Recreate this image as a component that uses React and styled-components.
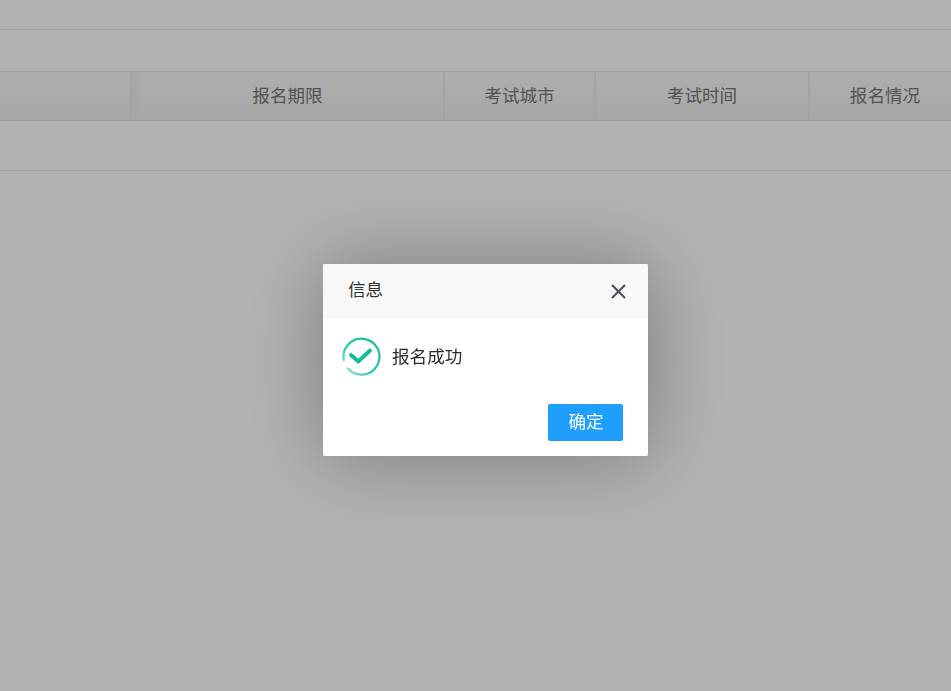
import React from "react"
import styled, { createGlobalStyle } from "styled-components"

const GlobalStyle = createGlobalStyle`
  html, body {
    margin: 0;
    padding: 0;
    height: 100%;
    background: #fff;
    overflow: hidden;
    font-family: "Liberation Sans", "Noto Sans CJK SC", sans-serif;
  }
`

const Page = styled.div`
  width: 951px;
  height: 691px;
  overflow: hidden;
`

const Row = styled.div`
  box-sizing: border-box;
  height: ${(p) => p.$height}px;
  border-bottom: 1px solid #e8e8e8;
`

const HeadRow = styled.div`
  box-sizing: border-box;
  display: grid;
  grid-template-columns: 131px 313px 151px 214px 152px;
  width: 961px;
  height: 49px;
  border-bottom: 1px solid #e2e2e2;
  background: linear-gradient(#fafafa, #f0f0f0);
`

const HeadCell = styled.div`
  box-sizing: border-box;
  display: flex;
  align-items: center;
  justify-content: center;
  padding-bottom: 3px;
  font-size: 17.6px;
  color: #767676;
  border-left: 1px solid #ececec;
  border-right: 1px solid #e8e8e8;
  &:first-child {
    border-left: 0;
  }
  ${(p) =>
    p.$shade &&
    `background: linear-gradient(90deg, #eeeeee, rgba(238, 238, 238, 0) 10px);`}
`

const Overlay = styled.div`
  position: fixed;
  inset: 0;
  background: rgba(0, 0, 0, 0.3);
`

const Modal = styled.div`
  position: fixed;
  left: 323px;
  top: 264px;
  width: 325px;
  height: 192px;
  display: flex;
  flex-direction: column;
  background: #fff;
  border-radius: 2px;
  box-shadow: 1px 1px 80px rgba(0, 0, 0, 0.32);
`

const ModalTitle = styled.div`
  box-sizing: border-box;
  display: flex;
  align-items: center;
  justify-content: space-between;
  height: 53px;
  padding: 0 20px 0 25px;
  background: #f8f8f8;
  border-bottom: 1px solid #eee;
  border-radius: 2px 2px 0 0;
  font-size: 17.6px;
  color: #333;
`

const TitleText = styled.span`
  margin-bottom: 3px;
`

const CloseButton = styled.svg`
  width: 19px;
  height: 19px;
  margin-top: 2px;
`

const ModalBody = styled.div`
  display: flex;
  align-items: center;
  gap: 11px;
  padding: 20px 0 0 19px;
  font-size: 17.6px;
  color: #2b2b2b;
`

const BodyText = styled.span`
  margin-bottom: 3px;
`

const ModalFooter = styled.div`
  display: flex;
  justify-content: flex-end;
  padding: 28px 25px 0 0;
`

const ConfirmButton = styled.button`
  width: 75px;
  height: 37px;
  padding: 0 0 4px 1px;
  border: 0;
  border-radius: 2px;
  background: #1e9fff;
  color: #fff;
  font: inherit;
  font-size: 17.6px;
`

const SuccessIcon = () => (
  <svg width="39" height="39" viewBox="0 0 39 39" fill="none">
    <defs>
      <linearGradient id="ring" x1="1" y1="0" x2="0" y2="1">
        <stop offset="0" stopColor="#13b997" />
        <stop offset="0.6" stopColor="#26c9ac" />
        <stop offset="1" stopColor="#a5e9dc" />
      </linearGradient>
    </defs>
    <path
      d="M5.5 31 A18 18 0 1 0 2 24"
      stroke="url(#ring)"
      strokeWidth="2.2"
    />
    <path
      d="M9 18 L16.3 24.5 L28 13.5"
      stroke="#14bb9b"
      strokeWidth="3.8"
      strokeLinecap="round"
      strokeLinejoin="round"
    />
  </svg>
)

const App = () => (
  <Page>
    <GlobalStyle />
    <Row $height={30} />
    <Row $height={42} />
    <HeadRow>
      <HeadCell />
      <HeadCell $shade>报名期限</HeadCell>
      <HeadCell>考试城市</HeadCell>
      <HeadCell>考试时间</HeadCell>
      <HeadCell>报名情况</HeadCell>
    </HeadRow>
    <Row $height={50} />
    <Overlay />
    <Modal>
      <ModalTitle>
        <TitleText>信息</TitleText>
        <CloseButton viewBox="0 0 19 19" fill="none">
          <path
            d="M3 3 L16 16 M16 3 L3 16"
            stroke="#50525e"
            strokeWidth="2.2"
          />
        </CloseButton>
      </ModalTitle>
      <ModalBody>
        <SuccessIcon />
        <BodyText>报名成功</BodyText>
      </ModalBody>
      <ModalFooter>
        <ConfirmButton>确定</ConfirmButton>
      </ModalFooter>
    </Modal>
  </Page>
)

export default App
